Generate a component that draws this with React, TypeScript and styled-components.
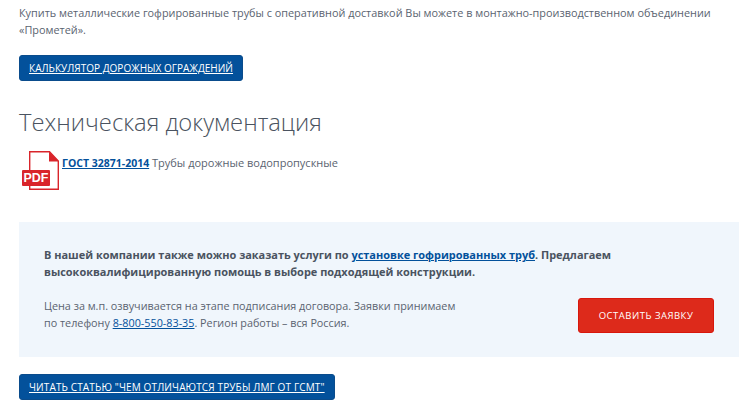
import styled, { createGlobalStyle } from 'styled-components'

const GlobalStyle = createGlobalStyle`
  html, body {
    margin: 0;
    padding: 0;
    background: #fff;
    overflow: hidden;
  }
`

const Page = styled.main`
  width: 751px;
  height: 416px;
  box-sizing: border-box;
  padding: 4px 12px 0 19px;
  font-family: 'Open Sans', sans-serif;
  font-size: 10.87px;
  line-height: 17px;
  color: #5a6370;
  overflow: hidden;
`

const Intro = styled.p`
  margin: 0;
`

const BlueButton = styled.a<{ $tracking: number }>`
  display: inline-block;
  height: 26px;
  box-sizing: border-box;
  padding: 0 9px;
  background: #03519b;
  border: 1px solid #0a4c8c;
  border-radius: 3px;
  color: #fff;
  font-size: 10px;
  line-height: 24px;
  letter-spacing: ${(p) => p.$tracking}px;
  text-decoration: underline;
  white-space: nowrap;
`

const TopAction = styled.div`
  margin-top: 17px;
  height: 26px;
`

const Heading = styled.h2`
  margin: 25px 0 0;
  font-size: 23.76px;
  font-weight: 300;
  line-height: 32px;
  color: #4a5360;
`

const DocRow = styled.div`
  display: flex;
  align-items: flex-start;
  margin-top: 13px;
  height: 42px;
`

const PdfIcon = styled.svg`
  display: block;
  width: 41px;
  height: 42px;
  flex: none;
  margin-right: 2px;
`

const DocText = styled.p`
  margin: 0;
  padding-top: 3px;
  font-size: 11px;
`

const StrongLink = styled.a`
  color: #03519b;
  font-weight: 700;
  text-decoration: underline;
`

const DocLink = styled(StrongLink)`
  font-size: 10.5px;
`

const OrderBox = styled.section`
  margin-top: 29px;
  width: 720px;
  height: 135px;
  box-sizing: border-box;
  padding: 24px 25px 0 25px;
  background: #f0f6fc;
`

const Lead = styled.p`
  margin: 0;
  font-size: 10.96px;
  font-weight: 700;
  color: #4a5360;
`

const OrderRow = styled.div`
  display: flex;
  justify-content: space-between;
  align-items: flex-start;
  margin-top: 17px;
`

const OrderText = styled.p`
  margin: 0;
  font-size: 10.8px;
`

const PhoneLink = styled.a`
  color: #03519b;
  text-decoration: underline;
`

const RedButton = styled.a`
  display: block;
  width: 136px;
  height: 35px;
  box-sizing: border-box;
  margin-top: 1px;
  background: #dd2a1b;
  border: 1px solid #d8170c;
  border-radius: 3px;
  color: #fff;
  font-size: 9.5px;
  line-height: 33px;
  letter-spacing: 0.5px;
  text-align: center;
  text-decoration: none;
`

const BottomAction = styled.div`
  margin-top: 17px;
`

export default function App() {
  return (
    <>
      <GlobalStyle />
      <Page>
        <Intro>
          Купить металлические гофрированные трубы с оперативной доставкой Вы можете в монтажно-производственном объединении
          <br />
          «Прометей».
        </Intro>
        <TopAction>
          <BlueButton href="#" $tracking={0.03}>КАЛЬКУЛЯТОР ДОРОЖНЫХ ОГРАЖДЕНИЙ</BlueButton>
        </TopAction>
        <Heading>Техническая документация</Heading>
        <DocRow>
          <PdfIcon viewBox="0 0 41 42" aria-hidden="true">
            <path d="M10.7 0.7H30.5L39.3 10V38.3H10.7Z" fill="#fff" stroke="#d9252b" strokeWidth="1.4" />
            <path d="M30 0.5V10.5H40Z" fill="#d9252b" />
            <rect x="3" y="19" width="28" height="16" rx="1" fill="#d9252b" />
            <text x="17" y="30.5" textAnchor="middle" fontFamily="'Liberation Sans', sans-serif" fontSize="12.5" fontWeight="700" fill="#fff">PDF</text>
          </PdfIcon>
          <DocText>
            <DocLink href="#">ГОСТ 32871-2014</DocLink> Трубы дорожные водопропускные
          </DocText>
        </DocRow>
        <OrderBox>
          <Lead>
            В нашей компании также можно заказать услуги по <StrongLink href="#">установке гофрированных труб</StrongLink>. Предлагаем
            <br />
            высококвалифицированную помощь в выборе подходящей конструкции.
          </Lead>
          <OrderRow>
            <OrderText>
              Цена за м.п. озвучивается на этапе подписания договора. Заявки принимаем
              <br />
              по телефону <PhoneLink href="#">8-800-550-83-35</PhoneLink>. Регион работы – вся Россия.
            </OrderText>
            <RedButton href="#">ОСТАВИТЬ ЗАЯВКУ</RedButton>
          </OrderRow>
        </OrderBox>
        <BottomAction>
          <BlueButton href="#" $tracking={0.14}>ЧИТАТЬ СТАТЬЮ "ЧЕМ ОТЛИЧАЮТСЯ ТРУБЫ ЛМГ ОТ ГСМТ"</BlueButton>
        </BottomAction>
      </Page>
    </>
  )
}
